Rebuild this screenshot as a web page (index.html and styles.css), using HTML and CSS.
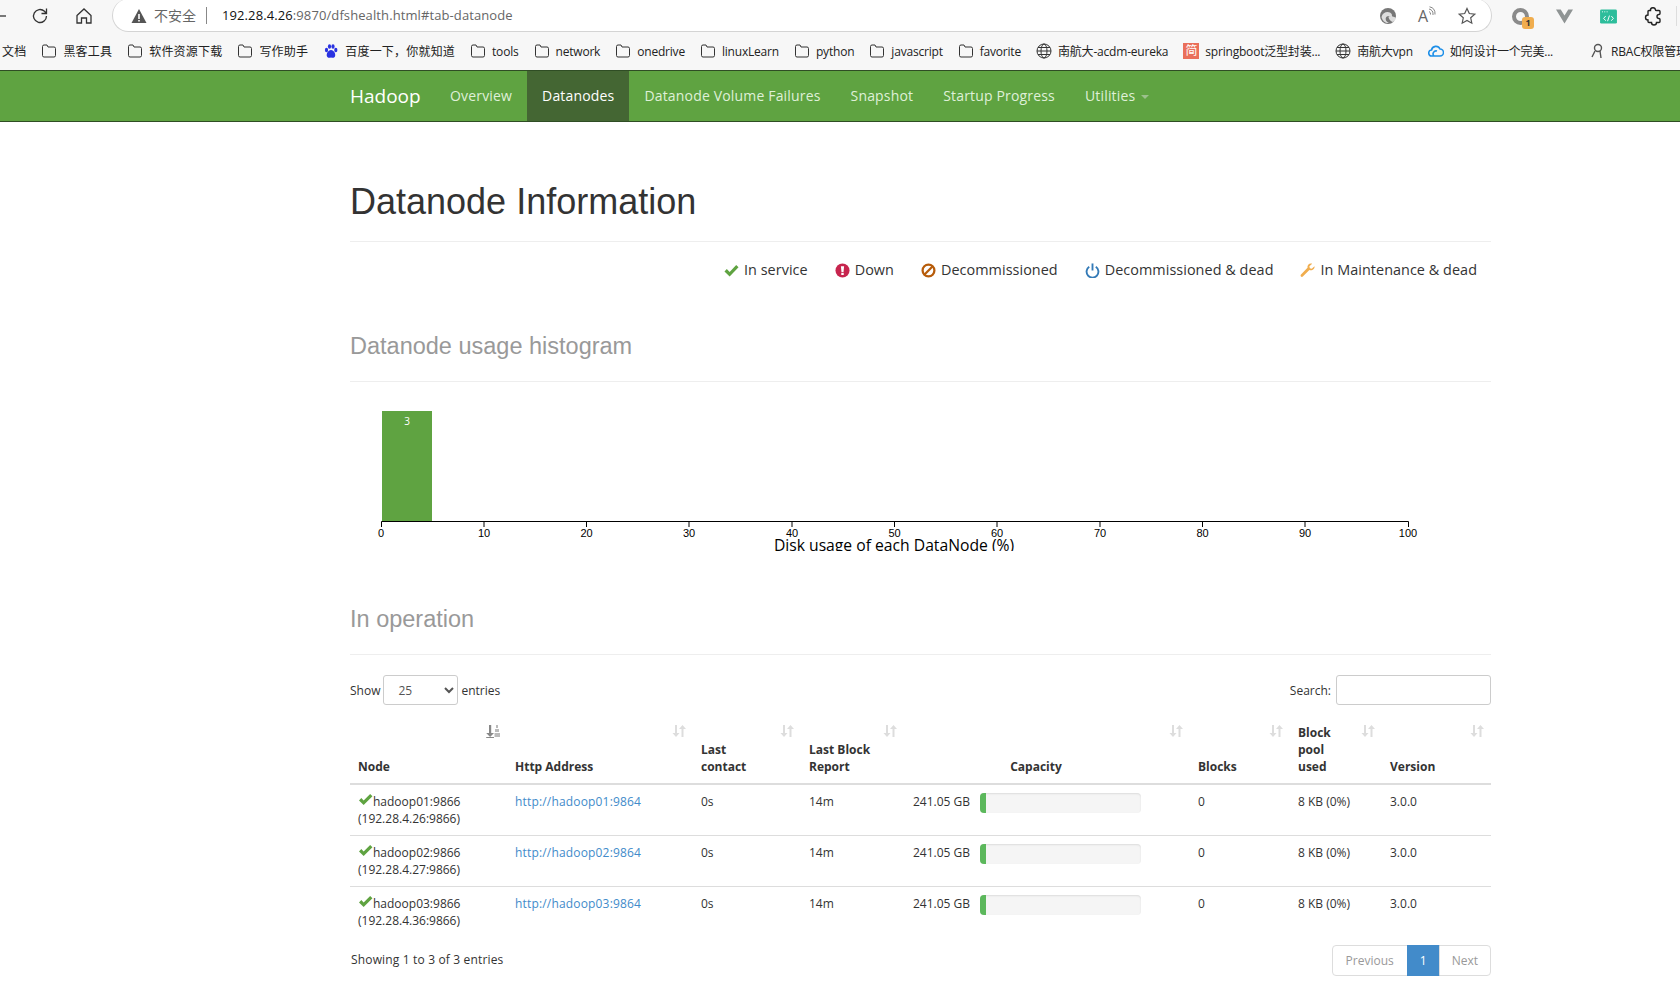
FILE: index.html
```html
<!DOCTYPE html>
<html lang="en">
<head>
    <meta charset="UTF-8">
    <title>Namenode information</title>
    <link rel="stylesheet" href="styles.css">
</head>
<body>
    <!-- Browser toolbar -->
    <div class="toolbar">
        <div class="toolbar-row">
            <svg class="tool-icon back" viewBox="0 0 6 16"><path d="M0 8h6" /></svg>
            <svg class="tool-icon reload" viewBox="0 0 20 20"><path d="M16.500 10a6.500 6.500 0 1 1-2-4.700L16.500 7.500M16.500 2.500v5h-5" /></svg>
            <svg class="tool-icon home" viewBox="0 0 20 20"><path d="M3 9.500 10 3l7 6.500V17h-4.500v-5h-5v5H3z" /></svg>
            <div class="address-bar">
                <svg class="warn-icon" viewBox="0 0 16 16"><path d="M8 1 15.500 15H.5z" /><path class="warn-mark" d="M7.200 6h1.600v5H7.200zM7.200 12h1.600v1.600H7.200z" /></svg>
                <span class="not-secure">不安全</span>
                <span class="address-divider"></span>
                <span class="url"><b>192.28.4.26</b>:9870/dfshealth.html#tab-datanode</span>
                <svg class="bar-icon refresh-edge" viewBox="0 0 20 20"><circle cx="10" cy="10" r="8" /><path class="edge-swirl" d="M3.500 11C4.500 6.500 9 5 12 6.500c2 1 2.500 3 1.500 4.500-1.500-1.500-4.500-1.500-5.500.5-1 2 .5 4.500 3 5.500-3.500.5-6.500-2-7.500-6z" /><path class="edge-swirl" d="M10.500 10.500c2-.5 6 0 7.500 1.500-.5 1.500-1.500 3-3 4-1 0-2.500-1-3.500-2.500-.8-1.200-1-2.500-1-3z" /></svg>
                <span class="read-aloud">A<svg class="aloud-waves" viewBox="0 0 8 10"><path d="M1 5.500q2 1 1.500 3M1 3q4.500 1 4 6M1.500 .8Q7.500 2 7 8.500" /></svg></span>
                <svg class="bar-icon star" viewBox="0 0 20 20"><path d="m10 2.500 2.300 5 5.500.6-4.100 3.700 1.100 5.400-4.800-2.700-4.800 2.700 1.100-5.400-4.100-3.700 5.500-.6z" /></svg>
            </div>
            <div class="extensions">
                <span class="ext-profile"><span class="ext-badge">1</span></span>
                <svg class="ext-vee" viewBox="0 0 18 16"><path d="M0 1h5l4 6.500L13 1h5L9 16z" /></svg>
                <svg class="ext-code" viewBox="0 0 18 16"><rect width="18" height="15" y=".5" rx="1.500" /><path class="code-dots" d="M2 3h1M4.500 3h1M7 3h1" /><path class="code-mark" d="M6 7.500 3.800 10 6 12.500M12 7.500l2.200 2.500-2.200 2.500M10 7l-2 6" /></svg>
                <svg class="ext-puzzle" viewBox="0 0 20 20"><path d="M7.500 4.500a2.500 2.500 0 0 1 5-.5q0 .5 1 .5H16q1 0 1 1v2q0 1-1 1a2 2 0 0 0 0 4q1 0 1 1v2q0 1-1 1h-2.500a2.500 2.500 0 0 1-5 0H6q-1 0-1-1v-1.500a2.500 2.500 0 0 1 0-5V5.500q0-1 1-1z" /></svg>
                <span class="toolbar-sep"></span>
            </div>
        </div>
        <div class="bookmarks">
            <span class="bookmark cjk">文档</span>
            <span class="bookmark cjk"><svg class="folder" viewBox="0 0 16 16"><path d="M1.500 3.500q0-1.500 1.500-1.500h3l1 2h6q1.500 0 1.500 1.500v7q0 1.500-1.500 1.500H3q-1.500 0-1.500-1.500z" /></svg>黑客工具</span>
            <span class="bookmark cjk"><svg class="folder" viewBox="0 0 16 16"><path d="M1.500 3.500q0-1.500 1.500-1.500h3l1 2h6q1.500 0 1.500 1.500v7q0 1.500-1.500 1.500H3q-1.500 0-1.500-1.500z" /></svg>软件资源下载</span>
            <span class="bookmark cjk"><svg class="folder" viewBox="0 0 16 16"><path d="M1.500 3.500q0-1.500 1.500-1.500h3l1 2h6q1.500 0 1.500 1.500v7q0 1.500-1.500 1.500H3q-1.500 0-1.500-1.500z" /></svg>写作助手</span>
            <span class="bookmark cjk"><svg class="site-icon" viewBox="0 0 16 16"><g fill="#2932e1"><ellipse cx="3.500" cy="7" rx="1.600" ry="2.200" /><ellipse cx="6.500" cy="3.500" rx="1.600" ry="2.200" /><ellipse cx="10" cy="3.500" rx="1.600" ry="2.200" /><ellipse cx="12.800" cy="7" rx="1.600" ry="2.200" /><path d="M8 7c-3 0-5 4-4 6.500 1 2 3 1 4 1s3 1 4-1c1-2.500-1-6.500-4-6.500z" /></g></svg>百度一下，你就知道</span>
            <span class="bookmark"><svg class="folder" viewBox="0 0 16 16"><path d="M1.500 3.500q0-1.500 1.500-1.500h3l1 2h6q1.500 0 1.500 1.500v7q0 1.500-1.500 1.500H3q-1.500 0-1.500-1.500z" /></svg>tools</span>
            <span class="bookmark"><svg class="folder" viewBox="0 0 16 16"><path d="M1.500 3.500q0-1.500 1.500-1.500h3l1 2h6q1.500 0 1.500 1.500v7q0 1.500-1.500 1.500H3q-1.500 0-1.500-1.500z" /></svg>network</span>
            <span class="bookmark"><svg class="folder" viewBox="0 0 16 16"><path d="M1.500 3.500q0-1.500 1.500-1.500h3l1 2h6q1.500 0 1.500 1.500v7q0 1.500-1.500 1.500H3q-1.500 0-1.500-1.500z" /></svg>onedrive</span>
            <span class="bookmark"><svg class="folder" viewBox="0 0 16 16"><path d="M1.500 3.500q0-1.500 1.500-1.500h3l1 2h6q1.500 0 1.500 1.500v7q0 1.500-1.500 1.500H3q-1.500 0-1.500-1.500z" /></svg>linuxLearn</span>
            <span class="bookmark"><svg class="folder" viewBox="0 0 16 16"><path d="M1.500 3.500q0-1.500 1.500-1.500h3l1 2h6q1.500 0 1.500 1.500v7q0 1.500-1.500 1.500H3q-1.500 0-1.500-1.500z" /></svg>python</span>
            <span class="bookmark"><svg class="folder" viewBox="0 0 16 16"><path d="M1.500 3.500q0-1.500 1.500-1.500h3l1 2h6q1.500 0 1.500 1.500v7q0 1.500-1.500 1.500H3q-1.500 0-1.500-1.500z" /></svg>javascript</span>
            <span class="bookmark"><svg class="folder" viewBox="0 0 16 16"><path d="M1.500 3.500q0-1.500 1.500-1.500h3l1 2h6q1.500 0 1.500 1.500v7q0 1.500-1.500 1.500H3q-1.500 0-1.500-1.500z" /></svg>favorite</span>
            <span class="bookmark"><svg class="globe" viewBox="0 0 16 16"><circle cx="8" cy="8" r="7" /><ellipse cx="8" cy="8" rx="3" ry="7" /><path d="M1 8h14M2 4.500h12M2 11.500h12" /></svg>南航大-acdm-eureka</span>
            <span class="bookmark"><span class="jian-icon">简</span>springboot泛型封装...</span>
            <span class="bookmark"><svg class="globe" viewBox="0 0 16 16"><circle cx="8" cy="8" r="7" /><ellipse cx="8" cy="8" rx="3" ry="7" /><path d="M1 8h14M2 4.500h12M2 11.500h12" /></svg>南航大vpn</span>
            <span class="bookmark"><svg class="cloud" viewBox="0 0 16 16"><path d="M4 13a3 3 0 0 1-.5-6 4.500 4.500 0 0 1 8.500-1 3.500 3.500 0 0 1 0 7zM6 13a3 3 0 0 1 3-5" /></svg>如何设计一个完美...</span>
            <span class="bookmark rbac"><svg class="rbac-icon" viewBox="0 0 16 16"><circle cx="9" cy="5" r="3.500" /><path d="M6 8 3 14M11 8l1 7" /></svg>RBAC权限管理</span>
        </div>
    </div>

    <!-- Navbar -->
    <div class="navbar">
        <div class="navbar-inner">
            <a class="navbar-brand" href="#">Hadoop</a>
            <a class="nav-link" href="#">Overview</a>
            <a class="nav-link active" href="#">Datanodes</a>
            <a class="nav-link" href="#">Datanode Volume Failures</a>
            <a class="nav-link" href="#">Snapshot</a>
            <a class="nav-link" href="#">Startup Progress</a>
            <a class="nav-link" href="#">Utilities<span class="caret"></span></a>
        </div>
    </div>

    <div class="container">
        <div class="page-header title-header">
            <h1>Datanode Information</h1>
        </div>

        <!-- Legend -->
        <ul class="legend">
            <li><svg class="legend-icon" viewBox="0 0 16 16"><path class="fill-green" d="M.5 9 3 6.500 6 9.500 13 2l2.500 2.500L6 14.500z" /></svg>In service</li>
            <li><svg class="legend-icon" viewBox="0 0 16 16"><circle class="fill-red" cx="8" cy="8" r="7.500" /><path class="fill-white" d="M6.300 3.500h3.400l-.6 6H6.900zM6.700 10.500h2.600v2.400H6.700z" /></svg>Down</li>
            <li><svg class="legend-icon" viewBox="0 0 16 16"><circle class="line-orange" cx="8" cy="8" r="6.300" /><path class="line-orange" d="M3.500 12.500l9-9" /></svg>Decommissioned</li>
            <li><svg class="legend-icon" viewBox="0 0 16 16"><path class="line-blue" d="M4.500 4a6.300 6.300 0 1 0 7 0" /><path class="line-blue" d="M8 .5V8" /></svg>Decommissioned &amp; dead</li>
            <li><svg class="legend-icon" viewBox="0 0 16 16"><path class="fill-amber" d="M15.500 3.500 12.500 6 10.500 5.500 10 3.500 13 .8C10 0 7.500 2 8 5L.8 12.500c-.8 1 .8 3.200 2.200 2L10 7.500c3 1 6-1 5.500-4z" /></svg>In Maintenance &amp; dead</li>
        </ul>

        <div class="page-header histogram-header">
            <h2>Datanode usage histogram</h2>
        </div>

        <!-- Histogram -->
        <svg class="histogram" viewBox="0 0 1140 160">
            <rect class="hist-bar" x="32" y="20" width="50" height="110" />
            <text class="hist-count" x="57" y="34">3</text>
            <path class="hist-axis" d="M31.500 136V130.500H1058.500V136" />
            <g class="hist-ticks">
                <path d="M134 130v6M236.500 130v6M339 130v6M442 130v6M544.500 130v6M647 130v6M750 130v6M852.500 130v6M955 130v6" />
            </g>
            <g class="hist-tick-labels">
                <text x="31" y="146">0</text>
                <text x="134" y="146">10</text>
                <text x="236.500" y="146">20</text>
                <text x="339" y="146">30</text>
                <text x="442" y="146">40</text>
                <text x="544.500" y="146">50</text>
                <text x="647" y="146">60</text>
                <text x="750" y="146">70</text>
                <text x="852.500" y="146">80</text>
                <text x="955" y="146">90</text>
                <text x="1058" y="146">100</text>
            </g>
            <text class="hist-label" x="544" y="160">Disk usage of each DataNode (%)</text>
        </svg>

        <div class="page-header operation-header">
            <h2>In operation</h2>
        </div>

        <div class="table-controls">
            <label class="length-control">Show <select class="length-select"><option>25</option></select> entries</label>
            <label class="search-control">Search: <input class="search-input" type="text"></label>
        </div>

        <table class="node-table">
            <thead>
                <tr>
                    <th class="col-node"><span class="sort-icon active-sort"><svg viewBox="0 0 14 14"><path d="M3 1h2.200v8H8l-3.900 4L.2 9H3zM.2 13h7.800v1H.2z" /><path class="sort-stack" d="M10 1h2v3h-2zM9 5h4v3H9zM8.500 9H14v4H8.500z" /></svg></span>Node</th>
                    <th class="col-http"><span class="sort-icon"><svg viewBox="0 0 14 14"><path d="M3 1h2v8h2.500L4 13 .5 9H3zM9.500 13V5H7l3.500-4L14 5h-2.500v8z" /></svg></span>Http Address</th>
                    <th class="col-contact"><span class="sort-icon"><svg viewBox="0 0 14 14"><path d="M3 1h2v8h2.500L4 13 .5 9H3zM9.500 13V5H7l3.500-4L14 5h-2.500v8z" /></svg></span>Last contact</th>
                    <th class="col-report"><span class="sort-icon"><svg viewBox="0 0 14 14"><path d="M3 1h2v8h2.500L4 13 .5 9H3zM9.500 13V5H7l3.500-4L14 5h-2.500v8z" /></svg></span>Last Block Report</th>
                    <th class="col-capacity"><span class="sort-icon"><svg viewBox="0 0 14 14"><path d="M3 1h2v8h2.500L4 13 .5 9H3zM9.500 13V5H7l3.500-4L14 5h-2.500v8z" /></svg></span>Capacity</th>
                    <th class="col-blocks"><span class="sort-icon"><svg viewBox="0 0 14 14"><path d="M3 1h2v8h2.500L4 13 .5 9H3zM9.500 13V5H7l3.500-4L14 5h-2.500v8z" /></svg></span>Blocks</th>
                    <th class="col-pool"><span class="sort-icon"><svg viewBox="0 0 14 14"><path d="M3 1h2v8h2.500L4 13 .5 9H3zM9.500 13V5H7l3.500-4L14 5h-2.500v8z" /></svg></span>Block pool used</th>
                    <th class="col-version"><span class="sort-icon"><svg viewBox="0 0 14 14"><path d="M3 1h2v8h2.500L4 13 .5 9H3zM9.500 13V5H7l3.500-4L14 5h-2.500v8z" /></svg></span>Version</th>
                </tr>
            </thead>
            <tbody>
                <tr>
                    <td><svg class="node-check" viewBox="0 0 16 14"><path d="M1 8l2.500-2.500L6 8l7-7 2.500 2.500L6 13z" /></svg>hadoop01:9866<br>(192.28.4.26:9866)</td>
                    <td><a href="#">http://hadoop01:9864</a></td>
                    <td>0s</td>
                    <td>14m</td>
                    <td><div class="capacity"><span class="capacity-text">241.05 GB</span><div class="progress"><div class="progress-bar" style="width: 4%"></div></div></div></td>
                    <td>0</td>
                    <td>8 KB (0%)</td>
                    <td>3.0.0</td>
                </tr>
                <tr>
                    <td><svg class="node-check" viewBox="0 0 16 14"><path d="M1 8l2.500-2.500L6 8l7-7 2.500 2.500L6 13z" /></svg>hadoop02:9866<br>(192.28.4.27:9866)</td>
                    <td><a href="#">http://hadoop02:9864</a></td>
                    <td>0s</td>
                    <td>14m</td>
                    <td><div class="capacity"><span class="capacity-text">241.05 GB</span><div class="progress"><div class="progress-bar" style="width: 4%"></div></div></div></td>
                    <td>0</td>
                    <td>8 KB (0%)</td>
                    <td>3.0.0</td>
                </tr>
                <tr>
                    <td><svg class="node-check" viewBox="0 0 16 14"><path d="M1 8l2.500-2.500L6 8l7-7 2.500 2.500L6 13z" /></svg>hadoop03:9866<br>(192.28.4.36:9866)</td>
                    <td><a href="#">http://hadoop03:9864</a></td>
                    <td>0s</td>
                    <td>14m</td>
                    <td><div class="capacity"><span class="capacity-text">241.05 GB</span><div class="progress"><div class="progress-bar" style="width: 4%"></div></div></div></td>
                    <td>0</td>
                    <td>8 KB (0%)</td>
                    <td>3.0.0</td>
                </tr>
            </tbody>
        </table>

        <div class="table-footer">
            <div class="table-info">Showing 1 to 3 of 3 entries</div>
            <div class="pagination">
                <a class="page-btn disabled" href="#">Previous</a>
                <a class="page-btn current" href="#">1</a>
                <a class="page-btn disabled" href="#">Next</a>
            </div>
        </div>
    </div>
</body>
</html>
```

FILE: styles.css
```css
/* Basic reset */
* {
    margin: 0;
    padding: 0;
    box-sizing: border-box;
}

html, body {
    height: 983px;
    overflow: hidden;
}

body {
    font-family: "Open Sans", "Noto Sans CJK SC", sans-serif;
    font-size: 12px;
    line-height: 17px;
    color: #333;
    background-color: #fff;
}

a {
    text-decoration: none;
}

/* Browser toolbar */
.toolbar {
    height: 70px;
    background-color: #f7f7f7;
    overflow: hidden;
}

.toolbar-row {
    display: flex;
    align-items: center;
    height: 32px;
}

.tool-icon {
    width: 20px;
    height: 20px;
    fill: none;
    stroke: #333;
    stroke-width: 1.3;
    flex: none;
}

.tool-icon.back {
    width: 6px;
    margin-right: 24px;
}

.tool-icon.reload {
    margin-right: 24px;
}

.tool-icon.home {
    margin-right: 18px;
}

.address-bar {
    display: flex;
    align-items: center;
    width: 1380px;
    height: 33px;
    margin-top: -2px;
    padding: 2px 14px 0 18px;
    background-color: #fff;
    border: 1px solid #d4d4d4;
    border-top: none;
    border-radius: 17px;
}

.warn-icon {
    width: 16px;
    height: 16px;
    fill: #555;
    flex: none;
}

.warn-mark {
    fill: #fff;
}

.not-secure {
    margin-left: 7px;
    font-size: 14px;
    color: #666;
}

.address-divider {
    width: 1px;
    height: 17px;
    margin: 0 15px 0 10px;
    background-color: #888;
}

.url {
    flex: 1;
    font-size: 13px;
    letter-spacing: 0.1px;
    color: #666;
}

.url b {
    font-weight: normal;
    color: #111;
}

.bar-icon {
    width: 20px;
    height: 20px;
    flex: none;
}

.refresh-edge {
    margin-right: -2px;
    fill: #777;
}

.edge-swirl {
    fill: #fff;
    opacity: 0.75;
}

.read-aloud {
    display: flex;
    align-items: flex-start;
    width: 20px;
    margin-left: 22px;
    font-size: 16px;
    line-height: 20px;
    color: #666;
}

.aloud-waves {
    width: 8px;
    height: 10px;
    fill: none;
    stroke: #777;
    stroke-width: 0.9;
}

.star {
    margin-left: 19px;
    fill: none;
    stroke: #555;
    stroke-width: 1.2;
}

.extensions {
    display: flex;
    align-items: center;
    margin-left: 20px;
}

.ext-profile {
    position: relative;
    width: 17px;
    height: 17px;
    border: 4px solid #8a8a8a;
    border-radius: 50%;
}

.ext-badge {
    position: absolute;
    top: 5px;
    left: 6px;
    width: 12px;
    height: 12px;
    font-size: 9px;
    line-height: 12px;
    font-weight: bold;
    text-align: center;
    color: #333;
    background-color: #f0ad4e;
    border-radius: 3px;
}

.ext-vee {
    width: 17px;
    height: 16px;
    margin-left: 27px;
    fill: #8f9494;
}

.ext-code {
    width: 17px;
    height: 15px;
    margin-left: 27px;
    fill: #2dbd9b;
}

.code-dots, .code-mark {
    fill: none;
    stroke: #fff;
    stroke-width: 1;
}

.ext-puzzle {
    width: 20px;
    height: 20px;
    margin-left: 26px;
    fill: none;
    stroke: #222;
    stroke-width: 1.4;
}

.toolbar-sep {
    width: 1px;
    height: 20px;
    margin-left: 13px;
    background-color: #ddd;
}

.bookmarks {
    display: flex;
    align-items: center;
    gap: 15px;
    height: 38px;
    padding-left: 2px;
    font-size: 12px;
    letter-spacing: -0.2px;
    color: #222;
    white-space: nowrap;
}

.bookmark {
    display: flex;
    align-items: center;
    flex: none;
}

.bookmark.cjk {
    letter-spacing: 0.2px;
}

.folder, .site-icon, .globe, .cloud, .rbac-icon {
    width: 16px;
    height: 16px;
    margin-right: 6px;
    flex: none;
}

.folder, .globe {
    fill: none;
    stroke: #333;
    stroke-width: 1;
}

.cloud {
    fill: none;
    stroke: #1e8fe8;
    stroke-width: 1.6;
}

.rbac-icon {
    fill: none;
    stroke: #555;
    stroke-width: 1.4;
}

.jian-icon {
    width: 16px;
    height: 16px;
    margin-right: 6px;
    font-size: 12px;
    line-height: 16px;
    text-align: center;
    color: #fff;
    background-color: #ea6f5a;
}

.rbac {
    margin-left: 21px;
}

/* Navbar */
.navbar {
    height: 52px;
    background-color: #5fa341;
    border-top: 1px solid #2f4d24;
    border-bottom: 1px solid #2f4d24;
}

.navbar-inner {
    display: flex;
    width: 1170px;
    margin-left: 335px;
    padding-left: 15px;
}

.navbar-brand {
    width: 85px;
    font-size: 19px;
    line-height: 50px;
    color: #fff;
}

.nav-link {
    padding: 0 15px;
    font-size: 14px;
    letter-spacing: 0.17px;
    line-height: 50px;
    color: #dff0d8;
}

.nav-link.active {
    color: #fff;
    background-color: #446633;
}

.caret {
    display: inline-block;
    margin-left: 6px;
    vertical-align: middle;
    border-top: 4px solid #9cc08c;
    border-left: 4px solid transparent;
    border-right: 4px solid transparent;
}

/* Main container */
.container {
    width: 1141px;
    margin-left: 350px;
}

.page-header {
    padding-bottom: 9px;
    border-bottom: 1px solid #eee;
}

.title-header {
    margin-top: 60px;
}

.title-header h1 {
    margin-bottom: 10px;
    font-family: "Liberation Sans", sans-serif;
    font-size: 36px;
    font-weight: 500;
    line-height: 40px;
}

.histogram-header h2, .operation-header h2 {
    margin-bottom: 13px;
    font-family: "Liberation Sans", sans-serif;
    font-size: 23.500px;
    font-weight: 500;
    line-height: 26px;
    color: #999;
}

.histogram-header {
    margin-top: 53px;
}

.operation-header {
    margin-top: 55px;
}

/* Legend */
.legend {
    display: flex;
    justify-content: flex-end;
    gap: 27px;
    margin-top: 18px;
    padding-right: 14px;
    font-size: 14.400px;
    letter-spacing: 0.05px;
    line-height: 20px;
    list-style: none;
}

.legend li {
    display: flex;
    align-items: center;
}

.legend-icon {
    width: 15px;
    height: 15px;
    margin-right: 5px;
}

.fill-green {
    fill: #5fa341;
}

.fill-red {
    fill: #c7254e;
}

.fill-white {
    fill: #fff;
}

.fill-amber {
    fill: #f0ad4e;
}

.line-orange {
    fill: none;
    stroke: #b75c0a;
    stroke-width: 2.400;
}

.line-blue {
    fill: none;
    stroke: #337ab7;
    stroke-width: 2;
}

/* Histogram */
.histogram {
    display: block;
    width: 1140px;
    height: 160px;
    margin-top: 9px;
}

.hist-bar {
    fill: #5fa341;
}

.hist-count {
    font-family: "Open Sans", sans-serif;
    font-size: 10px;
    text-anchor: middle;
    fill: #fff;
}

.hist-axis, .hist-ticks path {
    fill: none;
    stroke: #000;
    stroke-width: 1;
}

.hist-tick-labels text {
    font-family: "Liberation Sans", sans-serif;
    font-size: 11px;
    text-anchor: middle;
    fill: #000;
}

.hist-label {
    font-family: "Open Sans", sans-serif;
    font-size: 15.700px;
    text-anchor: middle;
    fill: #000;
}

/* Table controls */
.table-controls {
    display: flex;
    justify-content: space-between;
    align-items: center;
    margin-top: 20px;
}

.length-control, .search-control {
    display: flex;
    align-items: center;
    gap: 3px;
}

.search-control {
    gap: 5px;
}

.length-select {
    width: 75px;
    height: 30px;
    padding: 2px 10px;
    font-family: inherit;
    font-size: 12px;
    color: #555;
    background-color: #fff;
    border: 1px solid #ccc;
    border-radius: 3px;
}

.search-input {
    width: 155px;
    height: 30px;
    background-color: #fff;
    border: 1px solid #ccc;
    border-radius: 3px;
}

/* Node table */
.node-table {
    width: 1141px;
    margin-top: 11px;
    table-layout: fixed;
    border-collapse: collapse;
}

.node-table th {
    position: relative;
    padding: 8px 30px 8px 8px;
    font-weight: bold;
    text-align: left;
    vertical-align: bottom;
    border-bottom: 2px solid #ddd;
}

.node-table td {
    padding: 8px;
    vertical-align: top;
    border-top: 1px solid #ddd;
}

.node-table tbody tr:first-child td {
    border-top: none;
}

.node-table th.col-capacity {
    text-align: center;
}

.col-node { width: 157px; }
.col-http { width: 186px; }
.col-contact { width: 108px; }
.col-report { width: 103px; }
.col-capacity { width: 286px; }
.col-blocks { width: 100px; }
.col-pool { width: 92px; }
.col-version { width: 109px; }

.sort-icon {
    position: absolute;
    top: 8px;
    right: 7px;
    width: 14px;
    height: 14px;
}

.sort-icon svg {
    display: block;
    width: 14px;
    height: 14px;
    fill: #ddd;
}

.sort-icon.active-sort svg {
    fill: #888;
}

.sort-icon.active-sort .sort-stack {
    fill: #bbb;
}

.node-table td a {
    letter-spacing: 0.17px;
    color: #428bca;
}

.node-check {
    width: 15px;
    height: 13px;
    fill: #5fa341;
}

.capacity {
    display: flex;
    align-items: flex-start;
}

.capacity-text {
    width: 68px;
    padding-left: 1px;
}

.progress {
    width: 161px;
    height: 20px;
    overflow: hidden;
    background-color: #f5f5f5;
    border-radius: 4px;
    box-shadow: inset 0 1px 2px rgba(0, 0, 0, 0.1);
}

.progress-bar {
    height: 100%;
    background-color: #5cb85c;
}

/* Table footer */
.table-footer {
    display: flex;
    justify-content: space-between;
    align-items: flex-start;
    margin-top: 8px;
}

.table-info {
    margin-top: 6px;
    padding-left: 1px;
    letter-spacing: 0.16px;
}

.pagination {
    display: flex;
    height: 31px;
}

.page-btn {
    padding: 0 12px;
    line-height: 29px;
    border: 1px solid #ddd;
    margin-left: -1px;
}

.page-btn:first-child {
    padding: 0 13px;
    border-radius: 4px 0 0 4px;
}

.page-btn:last-child {
    border-radius: 0 4px 4px 0;
}

.page-btn.disabled {
    color: #999;
}

.page-btn.current {
    color: #fff;
    background-color: #428bca;
    border-color: #428bca;
}
```
